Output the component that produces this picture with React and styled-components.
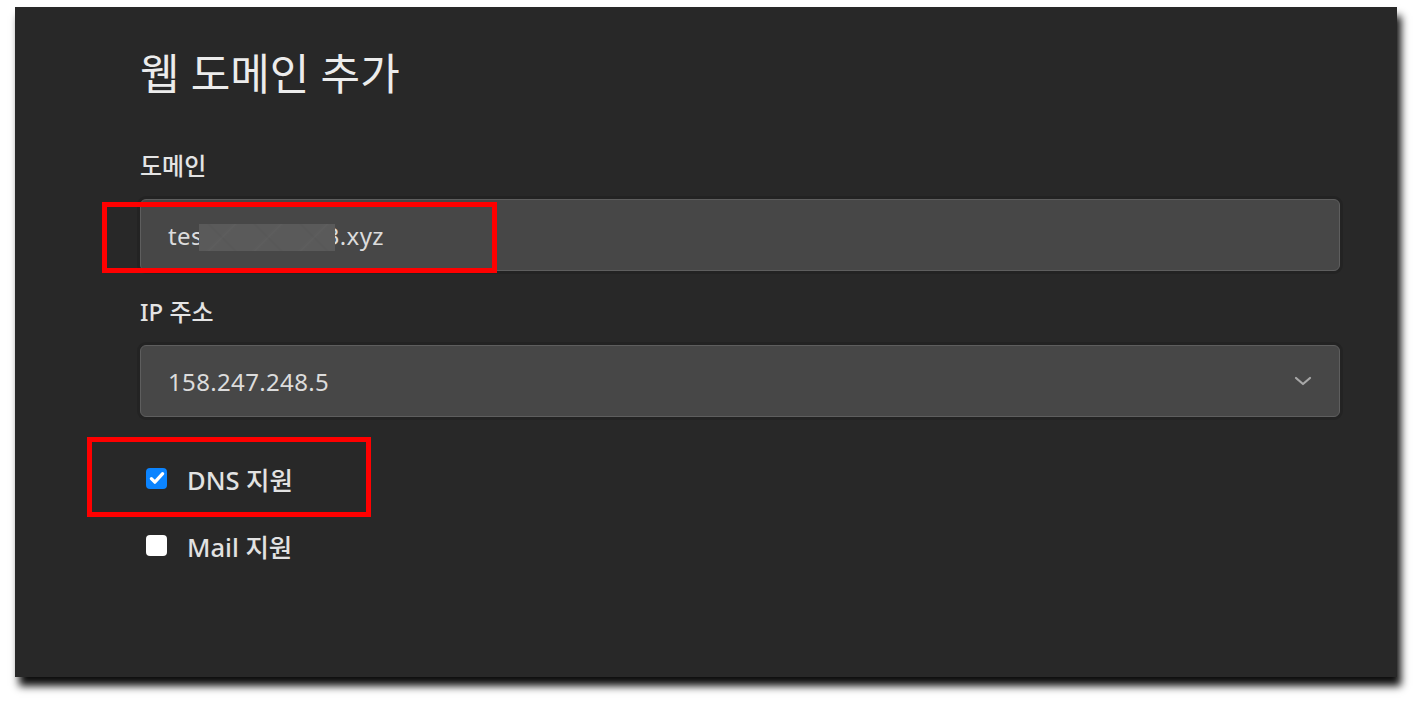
import React from "react";
import styled, { createGlobalStyle } from "styled-components";

const Global = createGlobalStyle`
  body{
    margin: 0;
    min-height: 706px;
    background: #ffffff;
    font-family: "Noto Sans", "Noto Sans CJK KR", sans-serif;
  }
`

const Panel = styled.div`
  position: relative;
  box-sizing: border-box;
  width: 1382px;
  height: 670px;
  margin: 7px 0 0 15px;
  padding: 39px 0 0 125px;
  background: #282828;
  box-shadow: 4px 9px 8px rgba(0, 0, 0, 0.95);
`

const Form = styled.div`
  display: flex;
  flex-direction: column;
  width: 1200px;
`

const Title = styled.h1`
  margin: 0 0 48px;
  font-size: 43px;
  line-height: 56px;
  font-weight: 400;
  color: #ececec;
`

const Label = styled.div`
  font-size: 24px;
  line-height: 32px;
  font-weight: 500;
  color: #e4e4e4;
  margin-bottom: 17px;
`

const Field = styled.div`
  position: relative;
  box-sizing: border-box;
  display: flex;
  align-items: center;
  height: 72px;
  padding: 0 27px;
  margin-bottom: ${p => p.$gap}px;
  background: #474747;
  border: 1px solid #5e5e5e;
  border-radius: 6px;
  box-shadow: 0 0 0 3px rgba(0, 0, 0, 0.12);
  font-size: 24px;
  letter-spacing: 0.35px;
  color: #dcdcdc;
`

const Redact = styled.span`
  position: relative;
  z-index: 1;
  display: inline-block;
  width: 136px;
  height: 27px;
  margin: 4px -9px 0 -4px;
  background:
    linear-gradient(135deg, transparent 46%, rgba(255,255,255,0.02) 50%, transparent 54%),
    linear-gradient(45deg, transparent 46%, rgba(0,0,0,0.025) 50%, transparent 54%),
    #5a5a5a;
  background-size: 46px 27px;
`

const Chevron = styled.svg`
  margin-left: auto;
`

const CheckRow = styled.label`
  display: flex;
  align-items: center;
  height: 40px;
  padding-left: 6px;
  margin-bottom: 27px;
  font-size: 25.5px;
  font-weight: 500;
  color: #e2e2e2;
`

const Box = styled.span`
  display: flex;
  align-items: center;
  justify-content: center;
  width: 21px;
  height: 21px;
  margin-right: 20px;
  border-radius: 4px;
  background: ${p => (p.$checked ? "#0b84ff" : "#ffffff")};
`

const Mark = styled.div`
  position: absolute;
  box-sizing: border-box;
  border: 5px solid #ff0000;
`

const Check = ({ checked, children }) => (
  <CheckRow>
    <Box $checked={checked}>
      {checked && (
        <svg width="18" height="18" viewBox="0 0 16 16">
          <path d="M3 8.6l3.1 3.1L13 4.2" fill="none" stroke="#fff" strokeWidth="2.9" strokeLinecap="round" strokeLinejoin="round" />
        </svg>
      )}
    </Box>
    {children}
  </CheckRow>
)

export default function App() {
  return (
    <>
      <Global />
      <Panel>
        <Form>
          <Title>웹 도메인 추가</Title>
          <Label>도메인</Label>
          <Field $gap={25}>
            tes<Redact />3.xyz
          </Field>
          <Label>IP 주소</Label>
          <Field $gap={41}>
            158.247.248.5
            <Chevron width="18" height="12" viewBox="0 0 18 12">
              <path d="M2 3l7 6 7-6" fill="none" stroke="#a8a8a8" strokeWidth="2.2" strokeLinecap="round" strokeLinejoin="round" />
            </Chevron>
          </Field>
          <Check checked>DNS 지원</Check>
          <Check>Mail 지원</Check>
        </Form>
        <Mark style={{ left: 87, top: 195, width: 395, height: 71 }} />
        <Mark style={{ left: 72, top: 430, width: 284, height: 80 }} />
      </Panel>
    </>
  );
}
